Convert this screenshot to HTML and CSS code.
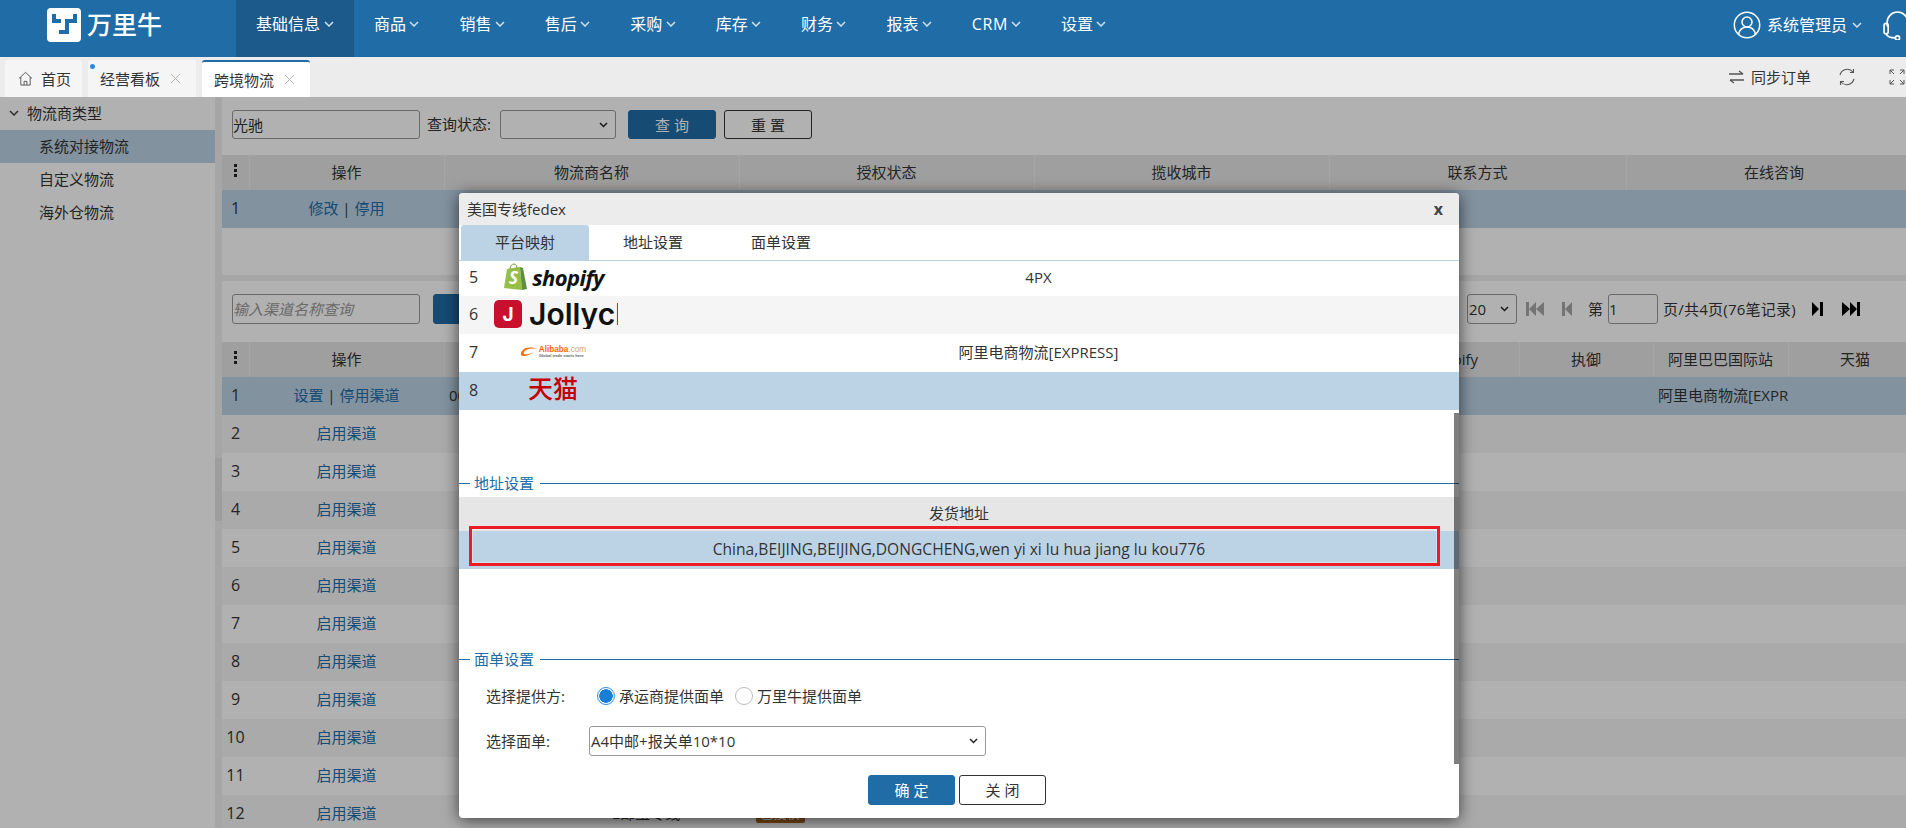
FILE: index.html
```html
<!DOCTYPE html>
<html lang="zh">
<head>
<meta charset="utf-8">
<title>跨境物流</title>
<link rel="stylesheet" href="styles.css">
</head>
<body>
<svg class="sprite" aria-hidden="true">
  <symbol id="caret" viewBox="0 0 10 6"><path d="M1 1l4 4 4-4" fill="none" stroke="currentColor" stroke-width="1.5"/></symbol>
  <symbol id="cross" viewBox="0 0 12 12"><path d="M1 1l10 10M11 1L1 11" fill="none" stroke="currentColor" stroke-width="1"/></symbol>
</svg>
<header class="topbar">
  <div class="brand">
    <svg class="brand-mark" viewBox="0 0 34 34"><rect width="34" height="34" rx="4" fill="#fff"/><path d="M7 6v7h7M28 6v7h-8v11h-8" fill="none" stroke="#206ca6" stroke-width="4"/></svg>
    <span class="brand-name">万里牛</span>
  </div>
  <nav class="nav">
    <a class="nav-item active">基础信息<svg class="caret"><use href="#caret"/></svg></a>
    <a class="nav-item">商品<svg class="caret"><use href="#caret"/></svg></a>
    <a class="nav-item">销售<svg class="caret"><use href="#caret"/></svg></a>
    <a class="nav-item">售后<svg class="caret"><use href="#caret"/></svg></a>
    <a class="nav-item">采购<svg class="caret"><use href="#caret"/></svg></a>
    <a class="nav-item">库存<svg class="caret"><use href="#caret"/></svg></a>
    <a class="nav-item">财务<svg class="caret"><use href="#caret"/></svg></a>
    <a class="nav-item">报表<svg class="caret"><use href="#caret"/></svg></a>
    <a class="nav-item latin">CRM<svg class="caret"><use href="#caret"/></svg></a>
    <a class="nav-item">设置<svg class="caret"><use href="#caret"/></svg></a>
  </nav>
  <div class="user">
    <svg class="user-icon" viewBox="0 0 28 28" fill="none" stroke="#fff" stroke-width="1.5"><circle cx="14" cy="14" r="12.7"/><circle cx="14" cy="11" r="5"/><path d="M5.5 23.5c1-5 4.500-7.500 8.500-7.500s7.500 2.500 8.500 7.500"/></svg>
    <span class="user-name">系统管理员</span>
    <svg class="caret"><use href="#caret"/></svg>
    <svg class="headset" viewBox="0 0 28 28" fill="none" stroke="#fff" stroke-width="1.6"><path d="M4 15V11a10 10 0 0 1 20 0v4"/><rect x="1" y="12" width="4" height="10" rx="2"/><rect x="23" y="12" width="4" height="10" rx="2"/><path d="M3 22c1 3 4 4 9 4"/><circle cx="14" cy="26" r="2"/></svg>
  </div>
</header>

<div class="tabbar">
  <div class="tab"><svg class="home" viewBox="0 0 16 16" fill="none" stroke="#555" stroke-width="1"><path d="M1 8l7-6.500L15 8M3 6.500V15h10V6.500M6.500 15v-4h3v4"/></svg>首页</div>
  <div class="tab closable"><i class="dot"></i>经营看板<svg class="cross"><use href="#cross"/></svg></div>
  <div class="tab closable current">跨境物流<svg class="cross"><use href="#cross"/></svg></div>
  <div class="tools">
    <svg class="swap" viewBox="0 0 15 14" fill="none" stroke="#555" stroke-width="1.4"><path d="M0 4h14M10 1l4 3M15 10H1M5 13l-4-3"/></svg>
    <span class="sync">同步订单</span>
    <svg class="refresh" viewBox="0 0 18 18" fill="none" stroke="#555" stroke-width="1.1"><path d="M2 7a7.500 7.500 0 0 1 13-3M16 11a7.500 7.500 0 0 1-13 3"/><path d="M15.500 1v3.500H12M2.500 17v-3.500H6"/></svg>
    <svg class="expand" viewBox="0 0 16 16" fill="none" stroke="#555" stroke-width="1"><path d="M1 5V1h4M1 1l4 4M11 1h4v4M15 1l-4 4M1 11v4h4M1 15l4-4M15 11v4h-4M15 15l-4-4"/></svg>
  </div>
</div>

<main class="workspace">
  <aside class="sidebar">
    <div class="tree-root"><svg class="caret"><use href="#caret"/></svg>物流商类型</div>
    <div class="tree-leaf selected">系统对接物流</div>
    <div class="tree-leaf">自定义物流</div>
    <div class="tree-leaf">海外仓物流</div>
  </aside>
  <div class="divider"><div class="divider-thumb"></div></div>
  <section class="content">
    <div class="panel upper">
      <div class="toolbar">
        <input class="field w188" value="光驰">
        <label class="field-label">查询状态:</label>
        <select class="picker w116"><option></option></select>
        <button class="btn primary first">查 询</button>
        <button class="btn">重 置</button>
      </div>
      <table class="grid">
        <colgroup><col class="c27"><col class="c195"><col class="c295"><col class="c295"><col class="c295"><col class="c297"><col class="c296"></colgroup>
        <thead><tr><th><i class="kebab"></i></th><th>操作</th><th>物流商名称</th><th>授权状态</th><th>揽收城市</th><th>联系方式</th><th>在线咨询</th></tr></thead>
        <tbody><tr class="on"><td class="num">1</td><td><a>修改</a> | <a>停用</a></td><td></td><td></td><td></td><td></td><td></td></tr></tbody>
      </table>
    </div>
    <div class="gap-bar"></div>
    <div class="panel">
      <div class="toolbar">
        <input class="field w188" placeholder="输入渠道名称查询">
        <button class="btn primary second">查 询</button>
        <div class="pager">
          <select class="picker w50"><option>20</option></select>
          <svg class="pg off first-ic" viewBox="0 0 18 16"><path d="M0 1h3v14H0zM10 1v14L3 8zM18 1v14L10 8z"/></svg>
          <svg class="pg off prev-ic" viewBox="0 0 10 16"><path d="M0 1h3v14H0zM10 1v14L3 8z"/></svg>
          <span class="pg-text">第</span>
          <input class="field w50 pg-input" value="1">
          <span class="pg-text pg-total">页/共4页(76笔记录)</span>
          <svg class="pg next-ic" viewBox="0 0 11 16"><path d="M0 1v14l7-7zM8 1h3v14H8z"/></svg>
          <svg class="pg last-ic" viewBox="0 0 18 16"><path d="M0 1v14l8-7zM8 1v14l7-7zM15 1h3v14h-3z"/></svg>
        </div>
      </div>
      <table class="grid">
        <colgroup><col class="c27"><col class="c195"><col class="c156"><col class="c92"><col class="c176"><col class="c257"><col class="c260"><col class="c134"><col class="c134"><col class="c135"><col class="c134"></colgroup>
        <thead><tr><th><i class="kebab"></i></th><th>操作</th><th>渠道代码</th><th>渠道名称</th><th>状态</th><th></th><th></th><th>Shopify</th><th>执御</th><th>阿里巴巴国际站</th><th>天猫</th></tr></thead>
        <tbody>
          <tr class="on"><td class="num">1</td><td><a>设置</a> | <a>停用渠道</a></td><td class="start">0001</td><td></td><td></td><td></td><td></td><td></td><td></td><td class="clip">阿里电商物流[EXPRESS]</td><td></td></tr>
          <tr><td class="num">2</td><td><a>启用渠道</a></td><td colspan="9"></td></tr>
          <tr><td class="num">3</td><td><a>启用渠道</a></td><td colspan="9"></td></tr>
          <tr><td class="num">4</td><td><a>启用渠道</a></td><td colspan="9"></td></tr>
          <tr><td class="num">5</td><td><a>启用渠道</a></td><td colspan="9"></td></tr>
          <tr><td class="num">6</td><td><a>启用渠道</a></td><td colspan="9"></td></tr>
          <tr><td class="num">7</td><td><a>启用渠道</a></td><td colspan="9"></td></tr>
          <tr><td class="num">8</td><td><a>启用渠道</a></td><td colspan="9"></td></tr>
          <tr><td class="num">9</td><td><a>启用渠道</a></td><td colspan="9"></td></tr>
          <tr><td class="num">10</td><td><a>启用渠道</a></td><td colspan="9"></td></tr>
          <tr><td class="num">11</td><td><a>启用渠道</a></td><td colspan="9"></td></tr>
          <tr><td class="num">12</td><td><a>启用渠道</a></td><td></td><td>E邮宝专线</td><td><span class="tag">已授权</span></td><td colspan="6"></td></tr>
        </tbody>
      </table>
    </div>
  </section>
</main>

<div class="overlay"></div>

<div class="dialog">
  <div class="dlg-title"><span>美国专线fedex</span><b class="dlg-close">x</b></div>
  <div class="dlg-tabs">
    <div class="dlg-tab current">平台映射</div>
    <div class="dlg-tab">地址设置</div>
    <div class="dlg-tab">面单设置</div>
  </div>
  <table class="map">
    <colgroup><col class="m-num"><col class="m-logo"><col></colgroup>
    <tbody>
      <tr class="first-row"><td class="m-index">5</td>
        <td><div class="logo centered">
          <svg class="shop-bag" viewBox="0 0 26 28"><path d="M2 25L5 6l13-2 2 23z" fill="#95bf47"/><path d="M18 4l3 1 4 21-5 1z" fill="#5e8e3e"/><path d="M8 6c0-3 2-5 4-5s3 2 3 5" fill="none" stroke="#7a9a3a" stroke-width="1"/><text x="7" y="21" class="shop-s">S</text></svg>
          <span class="shop-name">shopify</span>
        </div></td><td>4PX</td></tr>
      <tr class="alt"><td class="m-index">6</td>
        <td><div class="logo">
          <svg class="jolly-mark" viewBox="0 0 28 28"><rect width="28" height="28" rx="5" fill="#c8102e"/><text x="14" y="21" class="jolly-j">J</text></svg>
          <span class="jolly-name">Jollychic</span>
        </div></td><td></td></tr>
      <tr><td class="m-index">7</td>
        <td><div class="logo centered ali">
          <svg class="ali-mark" viewBox="0 0 18 10"><path d="M17 2C12 0 6 0 3 3c-3 3-3 6 1 6 3 0 7-2 10-4-4 2-8 3-10 2-1-1 0-3 2-4 2-1 6-2 11-1z" fill="#f60"/></svg>
          <span class="ali-text"><span class="ali-name">Alibaba<em>.com</em></span><span class="ali-sub">Global trade starts here</span></span>
        </div></td><td>阿里电商物流[EXPRESS]</td></tr>
      <tr class="on"><td class="m-index">8</td>
        <td><div class="logo centered"><span class="tmall">天猫</span></div></td><td></td></tr>
    </tbody>
  </table>

  <div class="legend first-legend"><i class="stub"></i><span>地址设置</span><i class="rule"></i></div>
  <div class="address">
    <div class="addr-head">发货地址</div>
    <div class="addr-row">China,BEIJING,BEIJING,DONGCHENG,wen yi xi lu hua jiang lu kou776</div>
    <div class="redbox"></div>
  </div>

  <div class="legend second-legend"><i class="stub"></i><span>面单设置</span><i class="rule"></i></div>
  <div class="form-row radio-row">
    <span class="form-label">选择提供方:</span>
    <span class="radio checked"></span><span class="radio-text">承运商提供面单</span>
    <span class="radio"></span><span class="radio-text">万里牛提供面单</span>
  </div>
  <div class="form-row select-row">
    <span class="form-label">选择面单:</span>
    <select class="picker w397"><option>A4中邮+报关单10*10</option></select>
  </div>
  <div class="dlg-actions">
    <button class="btn primary ok">确 定</button>
    <button class="btn cancel">关 闭</button>
  </div>
  <div class="dlg-scroll"></div>
</div>
</body>
</html>
```
FILE: styles.css
```css
* { box-sizing: border-box; }
html, body { margin: 0; height: 100%; }
body {
  width: 1906px;
  height: 828px;
  overflow: hidden;
  position: relative;
  background: #fff;
  color: #333;
  font: 15px/20px "Open Sans", "Noto Sans CJK SC", sans-serif;
}
a { color: #206ca6; }
i, em { font-style: normal; }
input, select, button { font: inherit; color: inherit; }
.sprite { display: none; }
.caret { width: 10px; height: 6px; color: #cfe0ee; flex: none; }

/* top bar */
.topbar { height: 57px; background: #206ca6; color: #fff; display: flex; overflow: hidden; }
.brand { width: 236px; flex: none; display: flex; align-items: flex-start; padding: 8px 0 0 47px; }
.brand-mark { width: 34px; height: 34px; flex: none; }
.brand-name { margin-left: 6px; font-size: 25px; line-height: 32px; font-weight: 500; }
.nav { display: flex; }
.nav-item { display: flex; align-items: center; gap: 3.400px; padding: 0 20px 9px; height: 57px; color: #fff; font-size: 16px; white-space: nowrap; }
.nav-item.active { background: #1b5a8a; gap: 4px; }
.nav-item.latin { letter-spacing: .6px; gap: 3px; }
.user { margin-left: auto; margin-right: -6px; display: flex; align-items: center; height: 50px; flex: none; }
.user-icon { width: 28px; height: 28px; }
.user-name { margin: 0 5px 0 6px; font-size: 16px; }
.headset { width: 29px; height: 29px; margin-left: 21px; }

/* tab strip */
.tabbar { height: 40px; background: #ececec; padding: 3px 0 0 5px; display: flex; gap: 6px; }
.tab { position: relative; height: 37px; padding: 0 11px 0 12px; display: flex; align-items: center; background: #f5f5f5; border-radius: 3px 3px 0 0; white-space: nowrap; }
.tab.closable { padding-right: 15px; }
.tab.current { background: #fff; border-top: 2px solid #206ca6; }
.home { width: 15px; height: 15px; margin-right: 8px; margin-left: 1px; }
.cross { width: 11px; height: 11px; margin-left: 10px; color: #aaa; }
.dot { position: absolute; left: 2px; top: 4px; width: 5px; height: 5px; border-radius: 50%; background: #2a8ae0; }
.tools { margin-left: auto; display: flex; align-items: center; height: 34px; margin-right: 1px; }
.swap { width: 15px; height: 14px; }
.sync { margin-left: 7px; }
.refresh { width: 18px; height: 18px; margin-left: 27px; }
.expand { width: 16px; height: 16px; margin-left: 33px; }

/* workspace */
.workspace { height: 731px; display: flex; overflow: hidden; }
.sidebar { width: 215px; flex: none; color: #333; }
.tree-root { height: 33px; display: flex; align-items: center; gap: 8px; padding: 0 0 2px 9px; }
.tree-root .caret { color: #444; }
.tree-leaf { height: 33px; line-height: 33px; padding-left: 39px; }
.tree-leaf.selected { background: #bcd3e6; }
.divider { width: 7px; flex: none; background: #f0f0f0; padding-top: 361px; }
.divider-thumb { height: 63px; background: #e2e2e2; }
.content { flex: 1; min-width: 0; overflow: hidden; }
.panel { width: 1700px; }
.panel.upper { height: 178px; }
.gap-bar { height: 6px; background: #f0f0f0; }

.toolbar { height: 58px; padding: 13px 0 0 10px; display: flex; align-items: flex-start; width: 1684px; }
.panel:not(.upper) .toolbar { height: 61px; }
.field { height: 29px; border: 1px solid #999; border-radius: 3px; padding: 0; background: #fff; outline: 0; }
.panel:not(.upper) .field { height: 30px; }
.field::placeholder { color: #999; font-style: italic; }
.w188 { width: 188px; }
.w50 { width: 50px; }
.w116 { width: 116px; }
.w397 { width: 397px; }
.field-label { margin: 0 9px 0 7px; line-height: 29px; white-space: nowrap; }
.picker {
  appearance: none;
  height: 29px;
  border: 1px solid #999;
  border-radius: 3px;
  padding: 0 18px 0 1px;
  background: #fff url("data:image/svg+xml,%3Csvg xmlns='http://www.w3.org/2000/svg' width='9' height='6'%3E%3Cpath d='M1 1l3.500 3.500L8 1' fill='none' stroke='%23222' stroke-width='1.500'/%3E%3C/svg%3E") no-repeat right 7px center;
}
.btn { height: 29px; width: 88px; border: 1px solid #333; border-radius: 3px; background: #fff; padding: 0; }
.btn.primary { background: #206ca6; border-color: #206ca6; color: #fff; }
.btn.first { margin: 0 8px 0 12px; }
.btn.second { margin-left: 13px; height: 30px; }
.pager { margin-left: auto; margin-right: 46px; display: flex; align-items: center; height: 30px; }
.pager .picker { height: 30px; }
.pg { height: 16px; fill: #000; flex: none; }
.pg.off { fill: #a8a8a8; }
.first-ic { width: 18px; margin-left: 9px; }
.prev-ic { width: 10px; margin-left: 18px; }
.pg-text { white-space: nowrap; }
.pg-total { letter-spacing: .25px; }
.prev-ic + .pg-text { margin-left: 16px; }
.pg-input { margin: 0 5px; }
.next-ic { width: 11px; margin-left: 16px; }
.last-ic { width: 18px; margin-left: 19px; }

/* grids */
.grid { table-layout: fixed; width: 1700px; border-collapse: collapse; }
.c27 { width: 27px; } .c92 { width: 92px; } .c134 { width: 134px; } .c135 { width: 135px; }
.c156 { width: 156px; } .c176 { width: 176px; } .c195 { width: 195px; } .c257 { width: 257px; }
.c260 { width: 260px; } .c295 { width: 295px; } .c296 { width: 296px; } .c297 { width: 297px; }
.grid th { height: 35px; background: #e6e6e6; border-right: 1px solid #f0f0f0; font-weight: 400; padding: 0 0 1px; text-align: center; }
.grid td { height: 38px; padding: 0 5px 2px; text-align: center; white-space: nowrap; overflow: hidden; }
.grid td.num { padding: 0 0 2px; font-size: 16px; }
.grid td.start { text-align: left; }
.grid tbody tr:nth-child(even) td { background: #f5f5f5; }
.grid tr.on td { background: #bcd3e6; }
.kebab { display: block; width: 3px; height: 3px; margin: -5px auto 0; background: #222; box-shadow: 0 5px 0 #222, 0 10px 0 #222; position: relative; top: -3px; }
.tag { display: inline-block; width: 49px; height: 20px; line-height: 20px; background: #a8641c; color: #fff; border-radius: 2px; font-size: 13px; vertical-align: top; }

.overlay { position: absolute; left: 0; right: 0; top: 97px; bottom: 0; background: rgba(0,0,0,.305); }

/* dialog */
.dialog { position: absolute; left: 459px; top: 193px; width: 1000px; height: 625px; background: #fff; border-radius: 4px; box-shadow: 0 2px 16px rgba(0,0,0,.65); overflow: hidden; }
.dlg-title { height: 32px; background: #ececec; display: flex; align-items: center; justify-content: space-between; padding: 0 16px 0 8px; }
.dlg-close { font-size: 16px; line-height: 16px; color: #444; }
.dlg-tabs { height: 36px; border-bottom: 1px solid #bcd3e6; display: flex; padding-left: 2px; }
.dlg-tab { width: 128px; height: 35px; line-height: 34px; text-align: center; }
.dlg-tab.current { background: #bcd3e6; border-radius: 3px 3px 0 0; }

.map { width: 1000px; table-layout: fixed; border-collapse: collapse; }
.m-num { width: 29px; }
.m-logo { width: 130px; }
.map td { height: 38px; padding: 0 0 2px; text-align: center; }
.map .m-index { font-size: 16px; }
.map .first-row td { height: 35px; padding-bottom: 4px; }
.map tr.alt td { background: #f5f5f5; }
.map tr.on td { background: #bcd3e6; }
.logo { display: flex; align-items: center; height: 30px; overflow: hidden; padding-left: 6px; width: 130px; }
.logo.centered { justify-content: center; padding-left: 0; }
.shop-bag { width: 26px; height: 28px; flex: none; }
.shop-s { font: italic 700 17px "Open Sans", sans-serif; fill: #fff; }
.shop-name { margin-left: 4px; font: italic 700 22px/28px "Open Sans", sans-serif; color: #111; letter-spacing: -.6px; }
.jolly-mark { width: 28px; height: 28px; flex: none; }
.jolly-j { font: 700 19px "Inter", sans-serif; fill: #fff; text-anchor: middle; }
.jolly-name { margin-left: 7px; font: 600 30px/30px "Inter", sans-serif; color: #111; white-space: nowrap; }
.ali-mark { width: 18px; height: 10px; flex: none; }
.ali-text { display: flex; flex-direction: column; margin-left: 1px; }
.ali-name { font: 700 8.200px/8px "Liberation Sans", sans-serif; color: #f60; text-align: left; }
.ali-name em { font-weight: 400; color: #d9a070; }
.ali-sub { font: 700 4px/4px "Liberation Sans", sans-serif; color: #666; white-space: nowrap; text-align: left; }
.tmall { font: 500 25px/30px "Noto Sans CJK SC", sans-serif; color: #c40000; padding-bottom: 6px; }

.legend { height: 20px; display: flex; align-items: center; color: #206ca6; }
.legend .stub { width: 11px; height: 1px; background: #206ca6; flex: none; }
.legend .rule { flex: 1; height: 1px; background: #206ca6; }
.legend span { padding: 0 6px 0 4px; }
.first-legend { margin-top: 63px; }
.second-legend { margin-top: 80px; }

.address { position: relative; margin-top: 4px; text-align: center; }
.addr-head { height: 34px; line-height: 32px; background: #e6e6e6; }
.addr-row { height: 38px; line-height: 36px; background: #bcd3e6; font-size: 15.600px; }
.redbox { position: absolute; left: 10px; top: 29px; width: 971px; height: 40px; border: 3px solid #ed1c24; box-shadow: inset 0 0 0 1px rgba(255,255,255,.3); }

.form-row { display: flex; align-items: center; height: 30px; }
.radio-row { margin-top: 13px; padding-bottom: 2px; }
.select-row { margin-top: 14px; }
.select-row .picker { height: 30px; }
.form-label { width: 130px; padding-left: 27px; flex: none; }
.radio { width: 18px; height: 18px; border-radius: 50%; border: 1px solid #bbb; margin-left: 8px; flex: none; background: #fff; }
.radio.checked { border: 1px solid #2a8ae0; background: radial-gradient(circle, #1a7fd4 0 6.500px, #fff 7px); }
.radio-text { margin: 0 4px 0 4px; }
.radio-text + .radio { margin-left: 7px; }
.dlg-actions { margin-top: 19px; display: flex; justify-content: center; gap: 4px; padding-right: 4px; }
.dlg-actions .btn { height: 30px; width: 87px; }
.dlg-scroll { position: absolute; right: 0; top: 220px; width: 5px; height: 351px; background: rgba(0,0,0,.5); }
```
